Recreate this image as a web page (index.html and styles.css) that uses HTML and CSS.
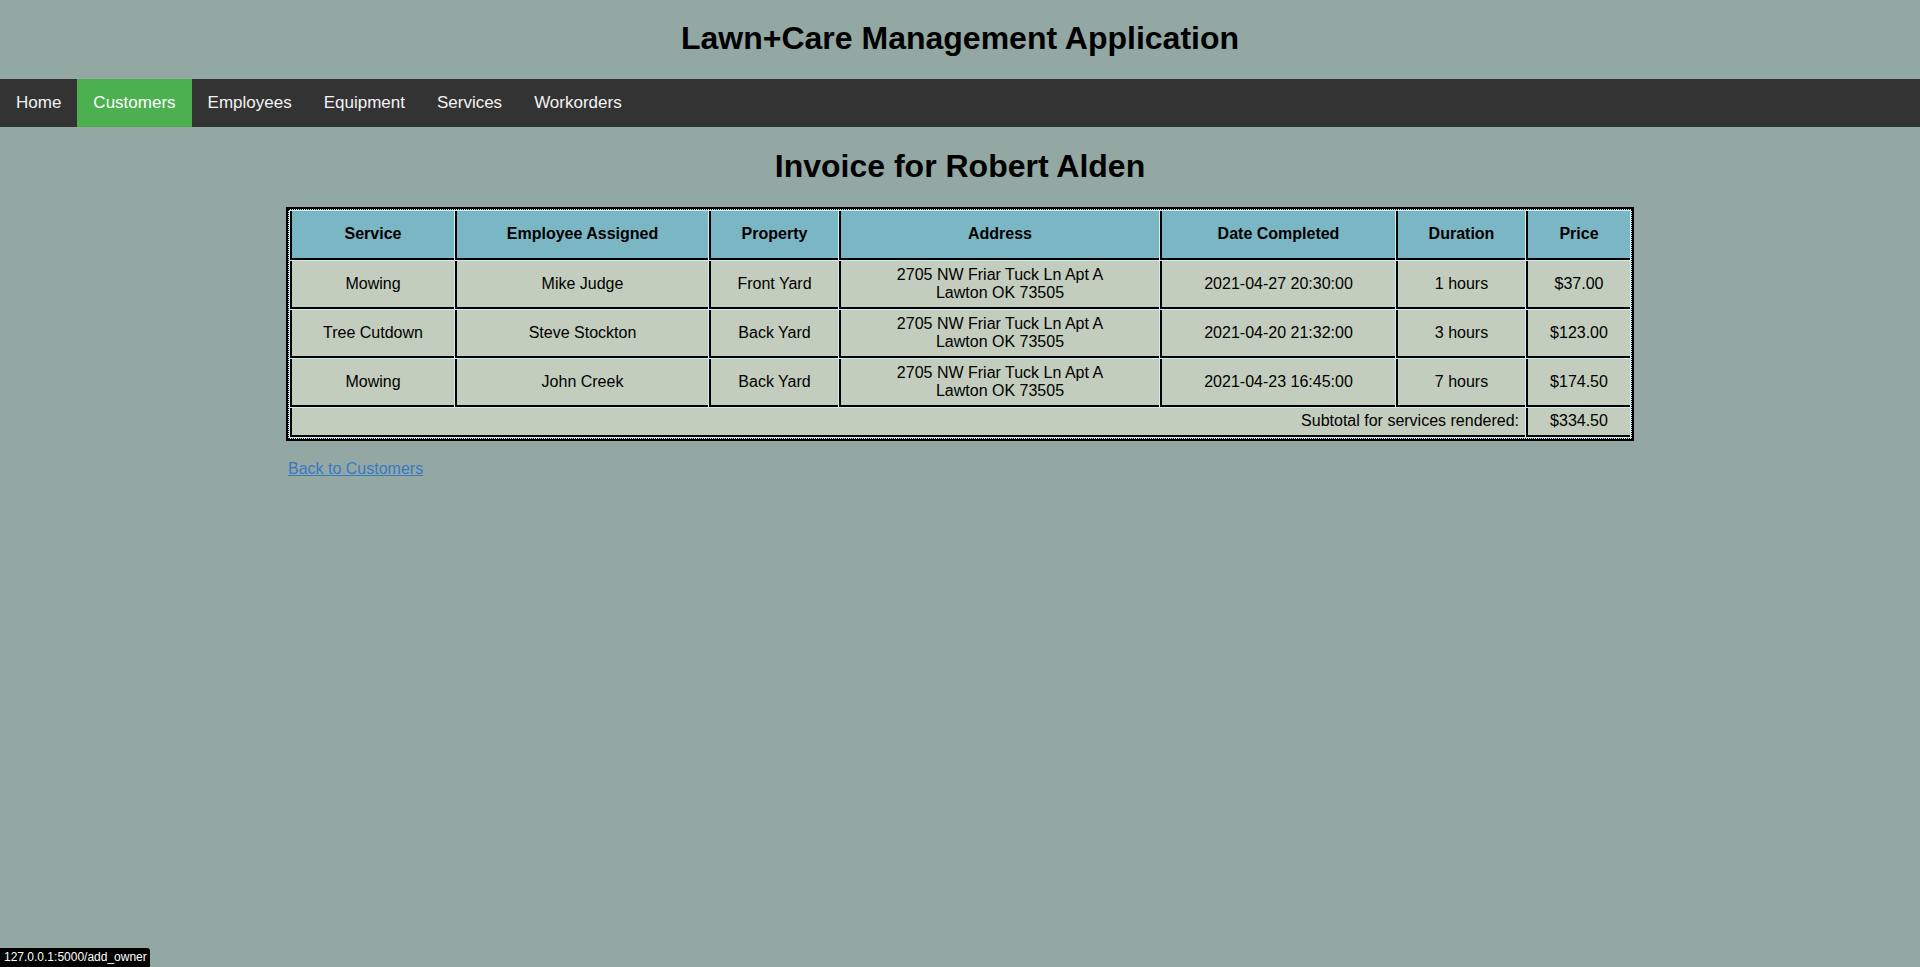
FILE: index.html
```html
<!DOCTYPE html>
<html lang="en">
<head>
<meta charset="utf-8">
<title>Invoice for Robert Alden</title>
<link rel="stylesheet" href="styles.css">
</head>
<body>
<header class="site-header">
  <h1 class="site-title">Lawn+Care Management Application</h1>
</header>
<nav class="topnav">
  <a class="nav-link" href="#">Home</a>
  <a class="nav-link active" href="#">Customers</a>
  <a class="nav-link" href="#">Employees</a>
  <a class="nav-link" href="#">Equipment</a>
  <a class="nav-link" href="#">Services</a>
  <a class="nav-link" href="#">Workorders</a>
</nav>
<main class="content">
  <h1 class="page-title">Invoice for Robert Alden</h1>
  <table class="invoice">
    <thead>
      <tr>
        <th class="col-service">Service</th>
        <th class="col-employee">Employee Assigned</th>
        <th class="col-property">Property</th>
        <th class="col-address">Address</th>
        <th class="col-date">Date Completed</th>
        <th class="col-duration">Duration</th>
        <th class="col-price">Price</th>
      </tr>
    </thead>
    <tbody>
      <tr>
        <td>Mowing</td>
        <td>Mike Judge</td>
        <td>Front Yard</td>
        <td>2705 NW Friar Tuck Ln Apt A<br>Lawton OK 73505</td>
        <td>2021-04-27 20:30:00</td>
        <td>1 hours</td>
        <td>$37.00</td>
      </tr>
      <tr>
        <td>Tree Cutdown</td>
        <td>Steve Stockton</td>
        <td>Back Yard</td>
        <td>2705 NW Friar Tuck Ln Apt A<br>Lawton OK 73505</td>
        <td>2021-04-20 21:32:00</td>
        <td>3 hours</td>
        <td>$123.00</td>
      </tr>
      <tr>
        <td>Mowing</td>
        <td>John Creek</td>
        <td>Back Yard</td>
        <td>2705 NW Friar Tuck Ln Apt A<br>Lawton OK 73505</td>
        <td>2021-04-23 16:45:00</td>
        <td>7 hours</td>
        <td>$174.50</td>
      </tr>
      <tr class="subtotal-row">
        <td class="subtotal-label" colspan="6">Subtotal for services rendered:</td>
        <td>$334.50</td>
      </tr>
    </tbody>
  </table>
  <p class="back"><a class="back-link" href="#">Back to Customers</a></p>
</main>
<div class="status-bubble">127.0.0.1:5000/add_owner</div>
</body>
</html>
```
FILE: styles.css
```css
html, body {
  margin: 0;
  padding: 0;
}

body {
  background-color: #93a8a2;
  font-family: "Liberation Sans", Arial, sans-serif;
  color: #000;
  min-height: 967px;
}

.site-title {
  margin: 0;
  padding: 20px 0 22px;
  font-size: 32px;
  font-weight: bold;
  text-align: center;
  line-height: 37px;
}

.topnav {
  display: flex;
  background-color: #333333;
  height: 48px;
}

.nav-link {
  display: block;
  color: #f2f2f2;
  text-decoration: none;
  font-size: 17px;
  padding: 14px 16px;
  line-height: 20px;
}

.nav-link.active {
  background-color: #4caf50;
  color: #ffffff;
}

.content {
  width: 1344px;
  margin: 0 auto;
}

.page-title {
  margin: 21px 0 24px;
  font-size: 32px;
  font-weight: bold;
  text-align: center;
  line-height: 37px;
}

.invoice {
  width: 1344px;
  table-layout: fixed;
  border: 1px dotted #000;
  outline: 2px solid #000;
  background-color: #cbeef5;
  border-spacing: 1px;
  font-size: 16px;
}

.invoice th,
.invoice td {
  box-sizing: border-box;
  border-left: 2px solid #000;
  border-bottom: 2px solid #000;
  text-align: center;
  line-height: 18px;
  color: #000;
}

.col-service { width: 164px; }
.col-employee { width: 253px; }
.col-property { width: 129px; }
.col-address { width: 320px; }
.col-date { width: 235px; }
.col-duration { width: 129px; }
.col-price { width: 104px; }

.invoice th {
  background-color: #7bb6c5;
  font-weight: bold;
  padding: 14px 5px 15px;
}

.invoice td {
  background-color: #c3cdbd;
  padding: 5px 5px 5px;
}

.invoice .subtotal-label {
  text-align: right;
  padding-right: 6px;
}

.subtotal-row td {
  padding-top: 4px;
  padding-bottom: 5px;
}

.back {
  margin: 21px 0 0;
  font-size: 16px;
  line-height: 18px;
}

.back-link {
  color: #3a78c4;
  text-decoration: underline;
}

.status-bubble {
  position: fixed;
  left: 0;
  bottom: 0;
  background-color: #000;
  color: #fff;
  font-family: "Liberation Sans", Arial, sans-serif;
  font-size: 12px;
  line-height: 16px;
  padding: 1px 3px 2px 4px;
  border-top-right-radius: 3px;
}
```
